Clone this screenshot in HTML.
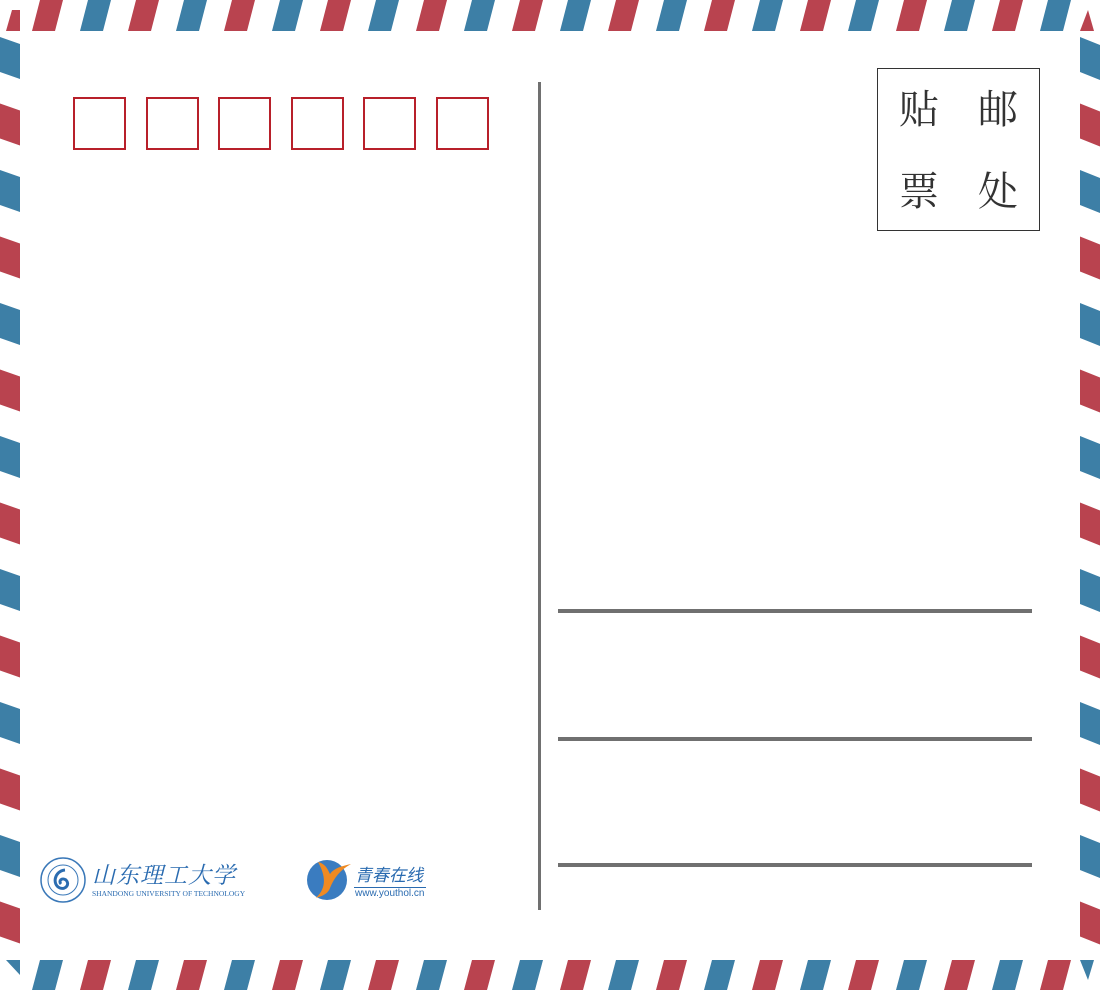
<!DOCTYPE html>
<html><head><meta charset="utf-8">
<style>
html,body{margin:0;padding:0;background:#fff}
#wrap{position:relative;width:1100px;height:990px;overflow:hidden;background:#fff;font-family:"Liberation Serif","Noto Serif CJK SC",serif}
.box{position:absolute;top:97px;width:49px;height:49px;border:2px solid #b8202a}
.ln{position:absolute;left:558px;width:474px;height:4px;background:#707070}
.st{position:absolute;font-size:40px;color:#333;line-height:40px}
</style></head><body>
<div id="wrap">
<svg id="s" width="1100" height="990" style="position:absolute;left:0;top:0"></svg>
<div class="box" style="left:73px"></div>
<div class="box" style="left:146px"></div>
<div class="box" style="left:218px"></div>
<div class="box" style="left:291px"></div>
<div class="box" style="left:363px"></div>
<div class="box" style="left:436px"></div>
<div style="position:absolute;left:538px;top:82px;width:3px;height:828px;background:#707070"></div>
<div class="ln" style="top:609px"></div>
<div class="ln" style="top:737px"></div>
<div class="ln" style="top:863px"></div>
<div style="position:absolute;left:877px;top:68px;width:161px;height:161px;border:1px solid #333"></div>
<div class="st" style="left:899px;top:90px">贴</div>
<div class="st" style="left:978px;top:90px">邮</div>
<div class="st" style="left:899px;top:172px">票</div>
<div class="st" style="left:978px;top:172px">处</div>
<svg width="60" height="60" style="position:absolute;left:34px;top:851px">
<circle cx="29" cy="29" r="22" fill="none" stroke="#3a78b8" stroke-width="1.5"/>
<circle cx="29" cy="29" r="15" fill="none" stroke="#3a78b8" stroke-width="1"/>
<path d="M31 19 C20 20 18 34 26 37 C32 39 36 33 32 29 C28 26 24 30 27 33" fill="none" stroke="#2b6cb0" stroke-width="3"/>
</svg>
<div style="position:absolute;left:92px;top:861px;font-size:23px;color:#2a6bb0;font-style:italic;letter-spacing:1px;font-family:'Noto Serif CJK SC',serif;line-height:26px">山东理工大学</div>
<div style="position:absolute;left:92px;top:889px;font-size:7.5px;color:#2a6bb0;font-family:'Liberation Serif',serif">SHANDONG UNIVERSITY OF TECHNOLOGY</div>
<svg width="50" height="50" style="position:absolute;left:304px;top:856px">
<circle cx="23" cy="24" r="20" fill="#3a7cc0"/>
<path d="M14 6 C22 8 24 14 26 18 C30 12 38 10 47 8 C36 14 30 22 26 32 C24 38 18 40 12 42 C20 34 24 24 14 6Z" fill="#ef8a22"/>
</svg>
<div style="position:absolute;left:355px;top:864px;font-size:17px;color:#2a6bb0;font-style:italic;font-family:'Noto Sans CJK SC',sans-serif;line-height:20px">青春在线</div>
<div style="position:absolute;left:354px;top:887px;width:72px;height:1px;background:#2a6bb0"></div>
<div style="position:absolute;left:355px;top:888px;font-size:10px;color:#2a6bb0;font-family:'Liberation Sans',sans-serif">www.youthol.cn</div>
</div>
<script>
var s=document.getElementById('s'),h='';
var R='#b9434f',B='#3d7fa6';
for(var i=0;i<22;i++){var x=32+48*i;var c=i%2?B:R;
h+='<polygon fill="'+c+'" points="'+(x+8)+',0 '+(x+31)+',0 '+(x+23)+',31 '+x+',31"/>';}
h+='<polygon fill="'+R+'" points="12,10 20,10 20,31 6,31"/><polygon fill="'+R+'" points="1088,10 1094,31 1080,31"/>';
for(var i=0;i<22;i++){var x=32+48*i;var c=i%2?R:B;
h+='<polygon fill="'+c+'" points="'+(x+8)+',960 '+(x+31)+',960 '+(x+23)+',990 '+x+',990"/>';}
h+='<polygon fill="'+B+'" points="6,960 20,960 20,975"/><polygon fill="'+B+'" points="1080,960 1094,960 1088,980"/>';
for(var i=0;i<14;i++){var y=37+66.5*i;var c=i%2?R:B;
h+='<polygon fill="'+c+'" points="0,'+y+' 20,'+(y+7)+' 20,'+(y+42)+' 0,'+(y+35)+'"/>';
h+='<polygon fill="'+c+'" points="1080,'+y+' 1100,'+(y+8)+' 1100,'+(y+43)+' 1080,'+(y+35)+'"/>';}
s.innerHTML=h;
</script>
</body></html>
